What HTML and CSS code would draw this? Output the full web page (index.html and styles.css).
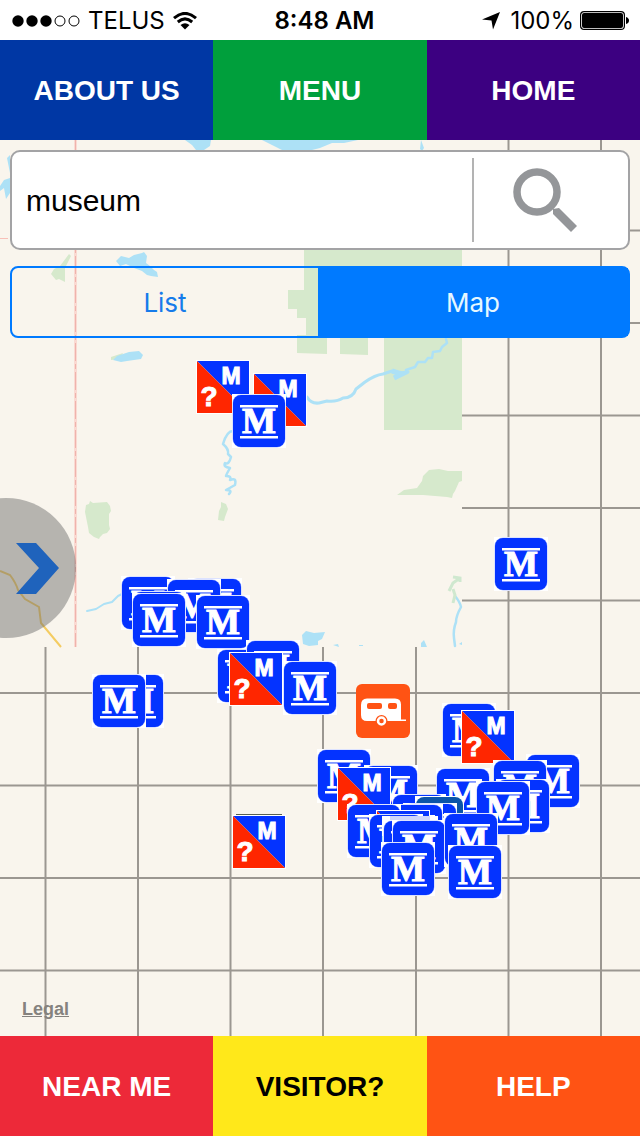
FILE: index.html
```html
<!DOCTYPE html>
<html lang="en">
<head>
<meta charset="utf-8">
<meta name="viewport" content="width=device-width, initial-scale=1">
<title>Museum map</title>
<link rel="stylesheet" href="styles.css">
</head>
<body>
<div class="app">
  <header class="status">
    <div class="status-left">
      <svg class="signal" viewBox="0 0 68 12" width="68" height="12" aria-hidden="true">
        <circle cx="6" cy="6" r="5.7"/><circle cx="20" cy="6" r="5.7"/><circle cx="34" cy="6" r="5.7"/>
        <circle cx="48" cy="6" r="5" fill="none" stroke="#000"/><circle cx="62" cy="6" r="5" fill="none" stroke="#000"/>
      </svg>
      <span>TELUS</span>
      <svg viewBox="0 0 24 18" width="24" height="18" aria-hidden="true">
        <path d="M1 6.200Q12-3.400 23 6.200M4.800 10Q12 3.800 19.200 10" fill="none" stroke="#000" stroke-width="3"/>
        <path d="M7.500 13.100Q12 9.200 16.500 13.100L12 17.600Z"/>
      </svg>
    </div>
    <time class="clock">8:48 AM</time>
    <div class="status-right">
      <svg class="arrow" viewBox="0 0 18 18" width="18" height="18" aria-hidden="true"><path d="M18 0 11 17.500 9.500 8.500 0 7.500Z"/></svg>
      <span>100%</span>
      <svg viewBox="0 0 49 19" width="49" height="19" aria-hidden="true">
        <rect x=".6" y=".6" width="43.800" height="17.800" rx="3.500" fill="none" stroke="#000" stroke-width="1.200"/>
        <rect x="2" y="2" width="41" height="15" rx="2"/><path d="M46 6q3 1 3 3.500t-3 3.500z"/>
      </svg>
    </div>
  </header>
  <nav class="bar">
    <a class="tab about" href="#about">ABOUT US</a>
    <a class="tab menu" href="#menu">MENU</a>
    <a class="tab home" href="#home">HOME</a>
  </nav>
  <main class="map">
    <svg class="canvas" viewBox="0 140 640 896" preserveAspectRatio="xMidYMid slice" role="img" aria-label="Map of museums">
      <defs>
        <symbol id="m" viewBox="0 0 54 54">
          <path fill="#fff" d="M0 0h54v54H0z"/>
          <rect x=".5" y=".5" width="53" height="53" rx="8.500" fill="#b9c6ff"/>
          <rect x="1" y="1" width="52" height="52" rx="8" fill="#0433ff"/>
          <path fill="#fff" d="M8 11h38v2.500H8zM8 42h38v2.500H8z"/>
          <text class="serif-m" x="27" y="39">M</text>
        </symbol>
        <symbol id="q" viewBox="0 0 54 54">
          <path fill="#fff" d="M0 0h54v54H0z"/>
          <path fill="#0433ff" d="M1 1h52v52z"/><path fill="#ff2600" d="M1 1v52h52z"/>
          <text class="sans-m" x="35" y="24">M</text>
          <text class="sans-q" x="13" y="46">?</text>
        </symbol>
      </defs>
      <path fill="#f9f5ed" d="M0 140h640v896H0z"/>
      <path fill="none" stroke="#9b9791" stroke-width="2" d="M45.500 140V1036M138 140V1036M230.500 140V1036M323 140V1036M416 140V1036M508.500 140V1036M601 140V1036M0 230.500H640M0 323H640M0 415.500H640M0 508H640M0 600.500H640M0 693H640M0 785.500H640M0 878H640M0 970.500H640"/>
      <path fill="#f9f5ed" d="M0 140h462v507H0z"/>
      <g fill="#d6e9cc">
        <path d="M304 250h158v180h-78v-92h-16v17l-28-1v-16h-13v16l-30-1v-18h9v-17h-9v-9h-9v-19h16z"/>
        <path d="M69 254l2 2-6 12v14l-6-3-3 1-5-6 3-5 6-3z"/>
        <path d="M111 357l12-4-3 6-9 1zM86 505l3-1 1-3 3 2 14-1 3 4 1 5-2 3v11l1 4-3 4-4 1-3 3-1 2-5-2-5-4-1-6-1-5-1-5-1-5z"/>
        <path d="M221 502l5 2 2 5-3 8-1 4-6-1 1-9 2-4z"/>
        <path d="M397 495l7-5 13-2 5-7 1-5 6-6 10-1 9 2 14 0v10l-3 1-4 9-2 3-1 4-5-1-24-2z"/>
      </g>
      <g fill="#ade1f6">
        <path d="M185 140h26l-1 6-6 4h-8l-4-5zM262 140h96l-14 3-12 0-12 5-8 2h-30l-12-6zM421 140l3 8-2 3-2-2z"/>
        <path d="M10 155l-3 3 3 15zM10 178l-6 2-4 6v5l4-3 2 11 4-6z"/>
        <path d="M116 261l5-5 8 2 5-3 8-2 2-1 3 4-1 7 4 3 4 4 3 2 1 5-7-1-4-1-5-4-8-3-8-4-6 2z"/>
        <path d="M120 355l9-3 10-1 4 4-2 4-14 2-6 1-8-2 4-4z"/>
        <path d="M302 635l4-4 8 2 11-1-3 7-4 2v4l-9 1-6-2zM333 645l5-1 1 3zM421 643l3-3 3 7h-6zM359 645h4v1h-4zM459 644l3-2v3z"/>
      </g>
      <g fill="none" stroke="#ade1f6" stroke-width="3" stroke-linejoin="round" stroke-linecap="round">
        <path d="M307 397q4 7 12 6l8-2q10 1 16-3 10 0 13-9l9-7q10-7 18-8l9-3 8 2 8-1"/>
        <path stroke-width="2.500" d="M406 370l9-3 3-5 7 0 3-4 4 0 1-6 7-1 2-4 5-4-1-4"/>
        <path stroke-width="2.500" d="M234 431q-7-1-11 13 6 5 5 10l3 3q-2 8-6 6-2 4 5 5-4 7-4 8 6 0 4 4 7-3 5 5-7 4-9 5 7 0 3 4"/>
        <path stroke-width="2" d="M87 611l9-2 8-5 8-2 6-6 6-3"/>
        <path stroke-width="2.500" d="M455 596q5 6 6 11-5 9-5 15-3 8-2 16l1 8"/>
      </g>
      <path fill="none" stroke="#ade1f6" stroke-width="5" d="M392 371l10 3-8 4"/>
      <path fill="none" stroke="#cfe8cf" stroke-width="3" d="M449 591l4-8 7-5M453 577l7 1v4M453 589l2 6-2 8"/>
      <path stroke="#fadad2" stroke-width="3" d="M75.500 140v507"/><path stroke="#efb3ac" stroke-width="1" stroke-dasharray="18 3 5 3" d="M75.500 140v507"/>
      <path stroke="#f8c0b8" stroke-dasharray="8 2" d="M0 238.500h75"/>
      <path fill="none" stroke="#f4cc62" stroke-width="2" d="M0 571l10 4q6 8 8 15l7 9 14 8 2 16 20 24"/>
      <g class="pins">
        <use href="#q" x="196" y="360" width="54" height="54"/><use href="#q" x="253" y="373" width="54" height="54"/><use href="#m" x="232" y="394" width="54" height="54"/>
        <use href="#m" x="121" y="576" width="54" height="54"/><use href="#m" x="188" y="578" width="54" height="54"/><use href="#m" x="167" y="579" width="54" height="54"/><use href="#m" x="132" y="591" width="54" height="54"/><use href="#m" x="132" y="593" width="54" height="54"/><use href="#m" x="196" y="595" width="54" height="54"/>
        <use href="#m" x="217" y="649" width="54" height="54"/><use href="#m" x="246" y="640" width="54" height="54"/><use href="#q" x="229" y="652" width="54" height="54"/><use href="#m" x="283" y="661" width="54" height="54"/>
        <use href="#m" x="110" y="674" width="54" height="54"/><use href="#m" x="92" y="674" width="54" height="54"/>
        <use href="#m" x="494" y="537" width="54" height="54"/>
        <use href="#m" x="442" y="703" width="54" height="54"/><use href="#q" x="461" y="710" width="54" height="54"/>
        <use href="#m" x="317" y="749" width="54" height="54"/><use href="#m" x="364" y="765" width="54" height="54"/><use href="#q" x="337" y="767" width="54" height="54"/>
        <use href="#m" x="526" y="754" width="54" height="54"/><use href="#m" x="493" y="760" width="54" height="54"/><use href="#m" x="436" y="768" width="54" height="54"/><use href="#m" x="496" y="779" width="54" height="54"/><use href="#m" x="476" y="781" width="54" height="54"/>
        <use href="#m" x="392" y="794" width="54" height="54"/>
        <path fill="#fff" d="M415 796h49v20h-49z"/><rect x="416" y="797" width="47" height="48" rx="8" fill="#0b55a8"/>
        <use href="#m" x="403" y="803" width="54" height="54"/><use href="#m" x="389" y="804" width="54" height="54"/><use href="#m" x="347" y="804" width="54" height="54"/>
        <use href="#q" x="376" y="810" width="54" height="54"/><use href="#m" x="369" y="814" width="54" height="54"/>
        <path fill="#fff" d="M382 816h56v20h-56z"/><path fill="#ced6fb" d="M390 816h40v5h-40z"/>
        <use href="#m" x="383" y="820" width="54" height="54"/><use href="#m" x="392" y="820" width="54" height="54"/><use href="#m" x="381" y="842" width="54" height="54"/>
        <use href="#m" x="444" y="813" width="54" height="54"/><use href="#m" x="448" y="845" width="54" height="54"/>
        <path fill="#59604f" d="M236 814h46v1h-46z"/><use href="#q" x="232" y="815" width="54" height="54"/>
      </g>
      <g>
        <rect x="356" y="684" width="54" height="54" rx="6" fill="#ff5314"/>
        <path fill="#fff" d="M367 698.500h28q6 0 6 6v15h5v1.500h-39q-6 0-6-6v-10q0-6.500 6-6.500z"/>
        <rect x="367" y="703" width="15" height="6" rx="2" fill="#ff5314"/><rect x="388" y="703" width="9" height="6" rx="2" fill="#ff5314"/>
        <circle cx="381.500" cy="721" r="6" fill="#ff5314"/>
        <circle cx="381.500" cy="721" r="3.500" fill="#ff5314" stroke="#fff" stroke-width="2.500"/>
      </g>
    </svg>
    <div class="controls">
      <form class="search" role="search">
        <input class="query" type="text" value="museum" aria-label="Search">
        <button class="go" type="button" aria-label="Search">
          <svg viewBox="0 0 64 64" width="64" height="64" aria-hidden="true">
            <circle cx="24" cy="24" r="20" fill="none" stroke="#949699" stroke-width="7.500"/>
            <path fill="#949699" d="M40 41l6-1 18 18-6 6-18-18z"/>
          </svg>
        </button>
      </form>
      <div class="switch" role="group" aria-label="View">
        <button class="view" type="button" aria-pressed="false">List</button>
        <button class="view on" type="button" aria-pressed="true">Map</button>
      </div>
    </div>
    <a class="legal" href="#legal">Legal</a>
  </main>
  <nav class="bar">
    <a class="tab near" href="#near">NEAR ME</a>
    <a class="tab visitor" href="#visitor">VISITOR?</a>
    <a class="tab help" href="#help">HELP</a>
  </nav>
  <button class="drawer" type="button" aria-label="Open drawer">
    <svg viewBox="0 0 76 140" width="76" height="140" aria-hidden="true">
      <circle cx="6" cy="70" r="70" fill="#6b6b6b" fill-opacity=".47"/>
      <path fill="#1f63bc" d="M16 45h20l23 25-23 26H16l23-26z"/>
    </svg>
  </button>
</div>
</body>
</html>
```
FILE: styles.css
```css
* { box-sizing: border-box; }
body { margin: 0; font-family: "Liberation Sans", Arial, sans-serif; background: #fff; }
button, input { font: inherit; margin: 0; }
svg { display: block; flex: none; }

.app { position: relative; display: flex; flex-direction: column; min-height: 100vh; }

.status { display: grid; grid-template-columns: 1fr auto 1fr; align-items: center; height: 40px; padding: 1px 11px 0 12px; font-family: Inter, sans-serif; font-size: 24px; color: #000; }
.status-left, .status-right { display: flex; align-items: center; gap: 8px; }
.status-right { justify-content: flex-end; gap: 6px; }
.arrow { margin-right: 4px; }
.clock { padding-left: 8px; font-weight: 600; }

.bar { display: grid; grid-template-columns: repeat(3, 1fr); height: 100px; }
.tab { display: flex; align-items: center; justify-content: center; padding-top: 2px; color: #fff; font-size: 28px; font-weight: 700; text-decoration: none; }
.about { background: #0037a4; }
.menu { background: #009f3c; }
.home { background: #3c0081; }
.near { background: #ed2939; }
.visitor { background: #ffe81a; color: #000; }
.help { background: #ff5314; }

.map { position: relative; flex: 1; display: flex; flex-direction: column; justify-content: space-between; overflow: hidden; background: #f9f5ed; }
.canvas { position: absolute; inset: 0; width: 100%; height: 100%; }
.serif-m, .sans-m, .sans-q { fill: #fff; stroke: #fff; text-anchor: middle; font-weight: 700; }
.serif-m { stroke-width: 1px; font-family: "Liberation Serif", serif; font-size: 36px; }
.sans-m { stroke-width: 1px; font-family: "Liberation Sans", sans-serif; font-size: 23px; }
.sans-q { stroke-width: 1px; font-family: "Liberation Sans", sans-serif; font-size: 28px; }

.controls { position: relative; display: flex; flex-direction: column; gap: 16px; padding: 10px; }
.search { display: flex; align-items: center; height: 100px; border: 2px solid #a3a3a5; border-radius: 10px; background: #fff; }
.query { flex: 1; min-width: 0; height: 84px; padding: 2px 14px 0; border: 0; background: none; color: #000; font-size: 30px; outline: 0; }
.go { display: flex; flex: none; align-items: center; justify-content: center; width: 156px; height: 84px; padding: 0 12px 0 0; border: 0; border-left: 2px solid #b3b3b3; background: none; }

.switch { display: grid; grid-template-columns: 153fr 155fr; height: 72px; border: 2px solid #007aff; border-radius: 8px; background: linear-gradient(90deg, transparent 50%, #007aff 50%); }
.view { padding: 0; border: 0; background: none; color: #167bea; font-family: Inter, sans-serif; font-size: 26px; }
.on { background: #007aff; color: #e6f7ff; }

.legal { position: relative; align-self: flex-start; margin: 0 22px 16px; color: #85827e; font-size: 18px; font-weight: 700; line-height: 22px; }
.drawer { position: absolute; left: 0; top: 50%; transform: translateY(-50%); padding: 0; border: 0; background: none; }
```
